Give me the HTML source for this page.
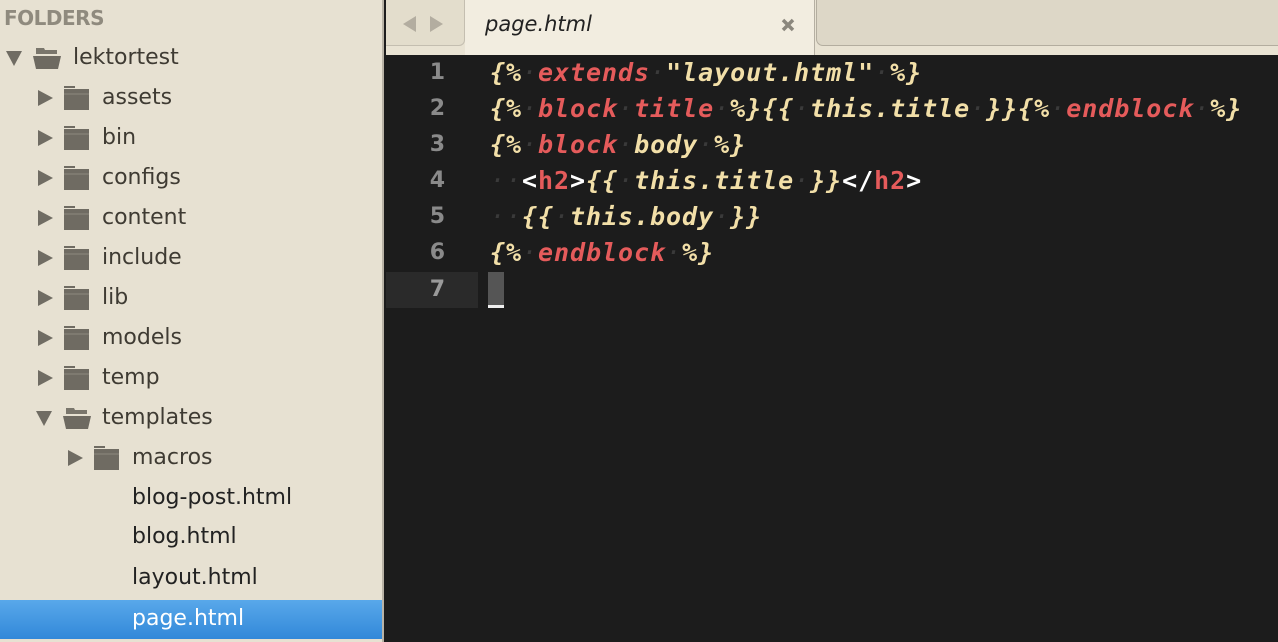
<!DOCTYPE html>
<html><head><meta charset="utf-8"><style>
*{margin:0;padding:0;box-sizing:border-box}
body{width:1278px;height:642px;overflow:hidden;background:#1c1c1c;position:relative;font-family:"DejaVu Sans","Liberation Sans",sans-serif}
#side{position:absolute;left:0;top:0;width:384px;height:642px;background:#e7e1d2;border-right:2px solid #b9b3a6}
.hdr{position:absolute;left:4px;top:6px;font-size:20px;font-weight:bold;color:#8f8a7e;letter-spacing:-0.5px}
.row{position:absolute;left:0;width:382px;height:40px;font-size:22px;color:#3f3b33;line-height:40px}
.row span.t{position:absolute}
.row svg{position:absolute}
.sel{background:linear-gradient(#59a8ea,#3288d9);color:#fff}
#tabs{position:absolute;left:386px;top:0;width:892px;height:55px;background:#e9e3d3}
.nav{position:absolute;left:0;top:0;width:79px;height:46px;background:#e3ddcc;border:1px solid #c4beb0;border-top:none;border-left:none;border-radius:0 0 6px 0}
.tab{position:absolute;left:79px;top:0;width:350px;height:55px;background:#f2ede0;border-right:1px solid #b5afa2}
.tab span{position:absolute;left:20px;top:12px;font-size:21px;font-style:italic;color:#222}
.rest{position:absolute;left:430px;top:0;width:470px;height:46px;background:#ddd7c7;border:1px solid #b3ad9f;border-top:none;border-right:none;border-radius:0 0 0 7px}
#code{position:absolute;left:386px;top:55px;width:892px;height:587px}
.ln{position:absolute;left:0;width:92px;height:36px;text-align:right;padding-right:33px;font-size:22px;font-weight:bold;line-height:36px;color:#8a8a8a;font-family:"DejaVu Sans",sans-serif}
.cl{position:absolute;left:104px;height:36px;line-height:36px;font-family:"DejaVu Sans Mono","Liberation Mono",monospace;font-style:italic;font-weight:bold;font-size:25px;letter-spacing:0.95px;color:#f2dfa8;white-space:pre}
.r{color:#e55b5b}.w{color:#fff;font-style:normal}.d{color:#3a3a3a;font-weight:normal}
</style></head><body>
<div id="side">
<div class="hdr">FOLDERS</div>
<div class="row" style="top:38px"><svg style="left:6px;top:13px" width="16" height="15"><path d="M0 0H16L8 15Z" fill="#706c63"/></svg><svg style="left:33px;top:10px" width="28" height="21"><path d="M3 0H11L12 2H24V6H3Z" fill="#7a766c"/><path d="M0 8H28L25 21H3Z" fill="#6e6a61"/></svg><span class="t" style="left:73px">lektortest</span></div>
<div class="row" style="top:78px"><svg style="left:38px;top:12px" width="15" height="16"><path d="M0 0L15 8L0 16Z" fill="#706c63"/></svg><svg style="left:64px;top:8px" width="25" height="24"><path d="M0 2H11V0H0Z M0 3H25V24H0Z" fill="#6f6b62"/><path d="M0 8H25" stroke="#8d897f"/></svg><span class="t" style="left:102px">assets</span></div>
<div class="row" style="top:118px"><svg style="left:38px;top:12px" width="15" height="16"><path d="M0 0L15 8L0 16Z" fill="#706c63"/></svg><svg style="left:64px;top:8px" width="25" height="24"><path d="M0 2H11V0H0Z M0 3H25V24H0Z" fill="#6f6b62"/><path d="M0 8H25" stroke="#8d897f"/></svg><span class="t" style="left:102px">bin</span></div>
<div class="row" style="top:158px"><svg style="left:38px;top:12px" width="15" height="16"><path d="M0 0L15 8L0 16Z" fill="#706c63"/></svg><svg style="left:64px;top:8px" width="25" height="24"><path d="M0 2H11V0H0Z M0 3H25V24H0Z" fill="#6f6b62"/><path d="M0 8H25" stroke="#8d897f"/></svg><span class="t" style="left:102px">configs</span></div>
<div class="row" style="top:198px"><svg style="left:38px;top:12px" width="15" height="16"><path d="M0 0L15 8L0 16Z" fill="#706c63"/></svg><svg style="left:64px;top:8px" width="25" height="24"><path d="M0 2H11V0H0Z M0 3H25V24H0Z" fill="#6f6b62"/><path d="M0 8H25" stroke="#8d897f"/></svg><span class="t" style="left:102px">content</span></div>
<div class="row" style="top:238px"><svg style="left:38px;top:12px" width="15" height="16"><path d="M0 0L15 8L0 16Z" fill="#706c63"/></svg><svg style="left:64px;top:8px" width="25" height="24"><path d="M0 2H11V0H0Z M0 3H25V24H0Z" fill="#6f6b62"/><path d="M0 8H25" stroke="#8d897f"/></svg><span class="t" style="left:102px">include</span></div>
<div class="row" style="top:278px"><svg style="left:38px;top:12px" width="15" height="16"><path d="M0 0L15 8L0 16Z" fill="#706c63"/></svg><svg style="left:64px;top:8px" width="25" height="24"><path d="M0 2H11V0H0Z M0 3H25V24H0Z" fill="#6f6b62"/><path d="M0 8H25" stroke="#8d897f"/></svg><span class="t" style="left:102px">lib</span></div>
<div class="row" style="top:318px"><svg style="left:38px;top:12px" width="15" height="16"><path d="M0 0L15 8L0 16Z" fill="#706c63"/></svg><svg style="left:64px;top:8px" width="25" height="24"><path d="M0 2H11V0H0Z M0 3H25V24H0Z" fill="#6f6b62"/><path d="M0 8H25" stroke="#8d897f"/></svg><span class="t" style="left:102px">models</span></div>
<div class="row" style="top:358px"><svg style="left:38px;top:12px" width="15" height="16"><path d="M0 0L15 8L0 16Z" fill="#706c63"/></svg><svg style="left:64px;top:8px" width="25" height="24"><path d="M0 2H11V0H0Z M0 3H25V24H0Z" fill="#6f6b62"/><path d="M0 8H25" stroke="#8d897f"/></svg><span class="t" style="left:102px">temp</span></div>
<div class="row" style="top:398px"><svg style="left:36px;top:13px" width="16" height="15"><path d="M0 0H16L8 15Z" fill="#706c63"/></svg><svg style="left:63px;top:10px" width="28" height="21"><path d="M3 0H11L12 2H24V6H3Z" fill="#7a766c"/><path d="M0 8H28L25 21H3Z" fill="#6e6a61"/></svg><span class="t" style="left:102px">templates</span></div>
<div class="row" style="top:438px"><svg style="left:68px;top:12px" width="15" height="16"><path d="M0 0L15 8L0 16Z" fill="#706c63"/></svg><svg style="left:94px;top:8px" width="25" height="24"><path d="M0 2H11V0H0Z M0 3H25V24H0Z" fill="#6f6b62"/><path d="M0 8H25" stroke="#8d897f"/></svg><span class="t" style="left:132px">macros</span></div>
<div class="row" style="top:478px;color:#222"><span class="t" style="left:132px">blog-post.html</span></div>
<div class="row" style="top:517px;color:#222"><span class="t" style="left:132px">blog.html</span></div>
<div class="row" style="top:558px;color:#222"><span class="t" style="left:132px">layout.html</span></div>
<div class="row sel" style="top:600px;height:39px"><span class="t" style="left:132px;line-height:38px">page.html</span></div>
</div>
<div id="tabs">
<div class="nav"><svg style="position:absolute;left:17px;top:16px" width="40" height="16"><path d="M0 8L13 0V16Z" fill="#b3ada0"/><path d="M27 0L40 8L27 16Z" fill="#b3ada0"/></svg></div>
<div class="tab"><span>page.html</span><svg style="position:absolute;left:316px;top:18px" width="14" height="14"><path d="M2 2L12 12M12 2L2 12" stroke="#8b877d" stroke-width="3.5"/></svg></div>
<div class="rest"></div>
</div>
<div id="code">
<div style="position:absolute;left:0;top:217px;width:92px;height:36px;background:#2a2a2a"></div>
<div class="ln" style="top:0">1</div><div class="ln" style="top:36px">2</div><div class="ln" style="top:72px">3</div><div class="ln" style="top:108px">4</div><div class="ln" style="top:144px">5</div><div class="ln" style="top:180px">6</div><div class="ln" style="top:217px;color:#9a9a9a">7</div>
<div class="cl" style="top:0">{%<span class="d">·</span><span class="r">extends</span><span class="d">·</span>"layout.html"<span class="d">·</span>%}</div>
<div class="cl" style="top:36px">{%<span class="d">·</span><span class="r">block</span><span class="d">·</span><span class="r">title</span><span class="d">·</span>%}{{<span class="d">·</span>this.title<span class="d">·</span>}}{%<span class="d">·</span><span class="r">endblock</span><span class="d">·</span>%}</div>
<div class="cl" style="top:72px">{%<span class="d">·</span><span class="r">block</span><span class="d">·</span>body<span class="d">·</span>%}</div>
<div class="cl" style="top:108px"><span class="d">··</span><span class="w">&lt;</span><span class="r" style="font-style:normal">h2</span><span class="w">&gt;</span>{{<span class="d">·</span>this.title<span class="d">·</span>}}<span class="w">&lt;/</span><span class="r" style="font-style:normal">h2</span><span class="w">&gt;</span></div>
<div class="cl" style="top:144px"><span class="d">··</span>{{<span class="d">·</span>this.body<span class="d">·</span>}}</div>
<div class="cl" style="top:180px">{%<span class="d">·</span><span class="r">endblock</span><span class="d">·</span>%}</div>
<div style="position:absolute;left:102px;top:217px;width:16px;height:36px;background:#555;border-bottom:3px solid #eee"></div>
</div>
</body></html>
